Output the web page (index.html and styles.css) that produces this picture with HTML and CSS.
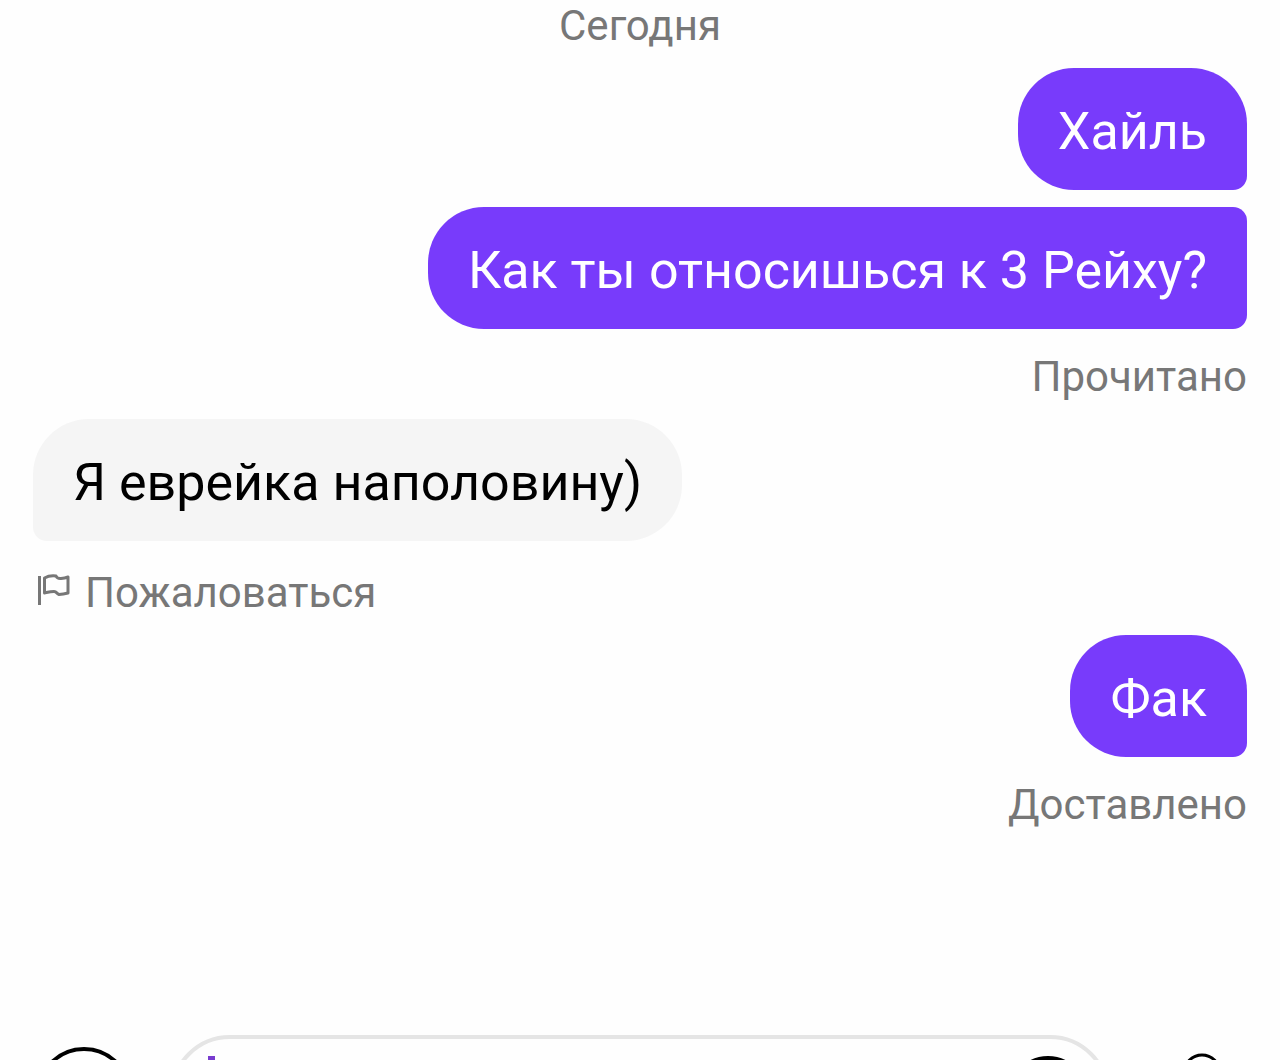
FILE: index.html
```html
<!DOCTYPE html>
<html lang="ru">
<head>
  <meta charset="utf-8">
  <meta name="viewport" content="width=device-width, initial-scale=1">
  <title>Чат</title>
  <link rel="stylesheet" href="styles.css">
</head>
<body>
  <main class="chat">
    <div class="date">Сегодня</div>
    <p class="bubble bubble-out">Хайль</p>
    <p class="bubble bubble-out bubble-next">Как ты относишься к 3 Рейху?</p>
    <div class="status">Прочитано</div>
    <p class="bubble bubble-in">Я еврейка наполовину)</p>
    <button class="report" type="button">
      <svg class="flag" viewBox="0 0 40 36" aria-hidden="true">
        <path d="M6.500 1V30"/>
        <path d="M11.500 3C15 1 19 .5 23 1C24 3.500 26 3.700 28 3.500C31 3.200 33 2.700 35 2V18C31 19 29 19.300 26 19.500C23 18.500 24 16.500 21 16.500C17 16.500 14 17.500 11.500 18Z"/>
      </svg>
      <span>Пожаловаться</span>
    </button>
    <p class="bubble bubble-out">Фак</p>
    <div class="status">Доставлено</div>
  </main>

  <form class="composer">
    <button type="button" aria-label="Камера">
      <svg class="camera" viewBox="0 0 100 100" aria-hidden="true"><circle cx="50" cy="50" r="46"/></svg>
    </button>
    <div class="field">
      <span class="caret"></span>
      <input class="message" type="text" aria-label="Сообщение">
      <button type="button" aria-label="Стикеры">
        <svg class="sticker" viewBox="0 0 80 80" aria-hidden="true"><circle cx="40" cy="40" r="37"/></svg>
      </button>
    </div>
    <button class="voice" type="button" aria-label="Голосовое сообщение">
      <svg class="mic" viewBox="0 0 80 88" aria-hidden="true">
        <path d="M22 22a18 18 0 0 1 36 0v22a18 18 0 0 1-36 0zM10 44a30 30 0 0 0 60 0M40 74v12"/>
      </svg>
    </button>
  </form>
</body>
</html>
```
FILE: styles.css
```css
* {
  box-sizing: border-box;
}

body {
  margin: 0;
  height: 100vh;
  overflow: hidden;
  background: #fefefe;
  color: #000;
  font-family: Roboto, "Noto Sans", sans-serif;
}

button {
  padding: 0;
  border: 0;
  background: none;
  color: inherit;
  font: inherit;
}

svg {
  display: block;
  fill: none;
  stroke: currentColor;
}

.chat {
  display: flex;
  flex-direction: column;
  gap: 17px;
  padding: 0 33px 205px;
}

.date,
.status,
.report {
  color: #777;
  font-size: 42px;
  line-height: 51px;
}

.date {
  align-self: center;
}

.status {
  align-self: flex-end;
  margin-top: 5px;
}

.bubble {
  margin: 0;
  padding: 33px 40px 27px;
  font-size: 52px;
  line-height: 62px;
}

.bubble-out {
  align-self: flex-end;
  border-radius: 56px 56px 14px 56px;
  background: #783bfb;
  color: #fff;
}

.bubble-next {
  border-top-right-radius: 14px;
}

.bubble-in {
  align-self: flex-start;
  border-radius: 56px 56px 56px 14px;
  background: #f5f5f5;
}

.report {
  display: flex;
  align-items: center;
  align-self: flex-start;
  gap: 12px;
  margin-top: 9px;
}

.flag {
  width: 40px;
  height: 36px;
  stroke-width: 3;
  stroke-linejoin: round;
  overflow: visible;
}

.composer {
  display: flex;
  align-items: center;
  gap: 36px;
  padding: 0 38px 0 34px;
}

.field {
  display: flex;
  flex: 1;
  align-items: center;
  min-width: 0;
  height: 120px;
  padding: 0 18px 0 34px;
  border: 4px solid #e5e5e5;
  border-radius: 60px;
}

.caret {
  width: 7px;
  height: 78px;
  background: #783bcf;
}

.message {
  flex: 1;
  min-width: 0;
  border: 0;
  outline: 0;
  background: none;
  font: inherit;
  font-size: 52px;
}

.camera {
  width: 100px;
  height: 100px;
  stroke-width: 4;
}

.sticker {
  width: 80px;
  height: 80px;
  stroke-width: 4;
}

.voice {
  margin-left: 16px;
}

.mic {
  width: 80px;
  height: 88px;
  stroke-width: 3;
}
```
